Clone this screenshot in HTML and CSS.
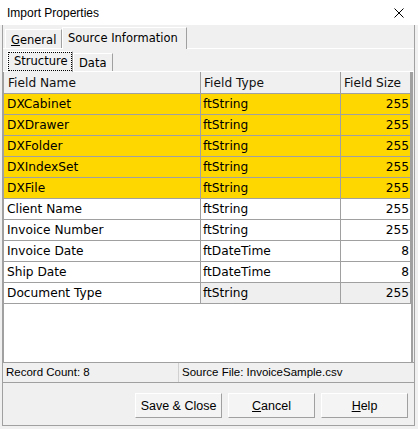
FILE: index.html
```html
<!DOCTYPE html>
<html>
<head>
<meta charset="utf-8">
<link rel="stylesheet" href="styles.css">
</head>
<body>
<div class="titlebar">
  <span class="title">Import Properties</span>
  <svg class="close" width="10" height="10" viewBox="0 0 10 10"><path d="M0.5 0.5 L9.5 9.5 M9.5 0.5 L0.5 9.5" stroke="#000" stroke-width="1" fill="none"/></svg>
</div>
<div class="frame">
  <div class="tabs1">
    <div class="tab tab-general"><u>G</u>eneral</div>
    <div class="tab active tab-source">Source Information</div>
  </div>
  <div class="tabs2">
    <div class="tab2 active2 tab-structure"><span class="focus">Structure</span></div>
    <div class="tab2 tab-data">Data</div>
  </div>
  <div class="grid">
    <table class="table">
      <colgroup><col class="c1"><col class="c2"><col class="c3"></colgroup>
      <thead>
        <tr><th>Field Name</th><th class="h2">Field Type</th><th class="h3">Field Size</th></tr>
      </thead>
      <tbody>
        <tr class="hl"><td>DXCabinet</td><td class="t2">ftString</td><td class="num">255</td></tr>
        <tr class="hl"><td>DXDrawer</td><td class="t2">ftString</td><td class="num">255</td></tr>
        <tr class="hl"><td>DXFolder</td><td class="t2">ftString</td><td class="num">255</td></tr>
        <tr class="hl"><td>DXIndexSet</td><td class="t2">ftString</td><td class="num">255</td></tr>
        <tr class="hl"><td>DXFile</td><td class="t2">ftString</td><td class="num">255</td></tr>
        <tr><td>Client Name</td><td class="t2">ftString</td><td class="num">255</td></tr>
        <tr><td>Invoice Number</td><td class="t2">ftString</td><td class="num">255</td></tr>
        <tr><td>Invoice Date</td><td class="t2">ftDateTime</td><td class="num">8</td></tr>
        <tr><td>Ship Date</td><td class="t2">ftDateTime</td><td class="num">8</td></tr>
        <tr class="sel"><td>Document Type</td><td class="t2">ftString</td><td class="num">255</td></tr>
      </tbody>
    </table>
  </div>
  <div class="status">
    <div class="panel p1">Record Count: 8</div>
    <div class="panel p2">Source File: InvoiceSample.csv</div>
  </div>
  <div class="buttons">
    <button class="btn">Save &amp; Close</button>
    <button class="btn"><u>C</u>ancel</button>
    <button class="btn"><u>H</u>elp</button>
  </div>
</div>
</body>
</html>
```
FILE: styles.css
```css
html, body {
  margin: 0;
  padding: 0;
}
body {
  width: 418px;
  height: 429px;
  background: #f0f0f0;
  overflow: hidden;
  font-family: "DejaVu Sans", Verdana, sans-serif;
  color: #000;
}
.titlebar {
  height: 25px;
  background: #fff;
  display: flex;
  align-items: center;
  justify-content: space-between;
  padding: 0 14px 0 7px;
  box-sizing: border-box;
}
.title {
  font-family: "Liberation Sans", Arial, sans-serif;
  font-size: 12px;
  color: #000;
}
.close {
  display: block;
}
.frame {
  margin-left: 2px;
  width: 411px;
  height: 400px;
  border: 1px solid #a0a0a0;
  border-top: none;
  display: flex;
  flex-direction: column;
}
.tabs1 {
  height: 23px;
  border-bottom: 1px solid #fff;
  display: flex;
  align-items: flex-end;
  padding-left: 2px;
}
.tab {
  box-sizing: border-box;
  height: 19px;
  border-top: 1px solid #fff;
  border-left: 1px solid #fff;
  border-right: 1px solid #a0a0a0;
  font-size: 11.5px;
  line-height: 20px;
  padding-left: 5px;
  white-space: nowrap;
}
.tab-general {
  width: 57px;
}
.tab-source {
  width: 125px;
  height: 22px;
  margin-bottom: -1px;
  background: #f0f0f0;
  line-height: 20px;
}
.tabs2 {
  height: 22px;
  border-bottom: 1px solid #fff;
  display: flex;
  align-items: flex-end;
  padding-left: 4px;
}
.tab2 {
  box-sizing: border-box;
  height: 18px;
  border-top: 1px solid #fff;
  border-left: 1px solid #fff;
  border-right: 1px solid #a0a0a0;
  font-size: 11.5px;
  line-height: 18px;
  white-space: nowrap;
}
.tab-structure {
  width: 66px;
  height: 21px;
  margin-bottom: -1px;
  background: #f0f0f0;
  display: flex;
  padding-bottom: 1px;
}
.focus {
  flex: 1;
  border: 1px dotted #000;
  line-height: 17px;
  padding-left: 5px;
}
.tab-data {
  width: 40px;
  padding-left: 5px;
  line-height: 18px;
}
.grid {
  height: 290px;
  width: 410px;
  box-sizing: border-box;
  background: #fff;
  border-left: 1px solid #a0a0a0;
  border-right: 2px solid #a0a0a0;
}
.table {
  table-layout: fixed;
  border-collapse: separate;
  border-spacing: 0;
  width: 407px;
  font-size: 12.2px;
}
.c1 { width: 197px; }
.c2 { width: 140px; }
.c3 { width: 70px; }
th, td {
  box-sizing: border-box;
  border-right: 1px solid #a0a0a0;
  border-bottom: 1px solid #a0a0a0;
  padding: 0 2px 0 3px;
  white-space: nowrap;
  overflow: hidden;
  text-align: left;
  font-weight: normal;
}
th {
  height: 22px;
  background: #f0f0f0;
  padding-left: 4px;
  color: #111;
}
th.h2 { padding-left: 3px; }
th.h3 { padding-left: 3px; }
td {
  height: 21px;
}
td.t2 {
  padding-left: 2px;
}
td.num {
  text-align: right;
  padding-right: 1px;
}
tr.hl td {
  background: #ffd700;
}
tr.sel td.t2, tr.sel td.num {
  background: #efefef;
}
.status {
  height: 19px;
  border-top: 1px solid #a0a0a0;
  border-bottom: 1px solid #a0a0a0;
  display: flex;
  font-family: "Liberation Sans", Arial, sans-serif;
  font-size: 11.5px;
  line-height: 19px;
}
.panel {
  padding-left: 3px;
  white-space: nowrap;
}
.p1 {
  width: 172px;
  border-right: 1px solid #d0d0d0;
}
.p2 {
  flex: 1;
  padding-left: 3px;
}
.buttons {
  flex: 1;
  display: flex;
  justify-content: flex-end;
  align-items: flex-start;
  gap: 6px;
  padding: 10px 6px 0 0;
}
.btn {
  width: 87px;
  height: 25px;
  box-sizing: border-box;
  margin: 0;
  padding: 0;
  background: #f4f4f4;
  border: 1px solid;
  border-color: #ffffff #a0a0a0 #a0a0a0 #ffffff;
  font-family: "Liberation Sans", Arial, sans-serif;
  font-size: 12.5px;
  color: #000;
}
```
